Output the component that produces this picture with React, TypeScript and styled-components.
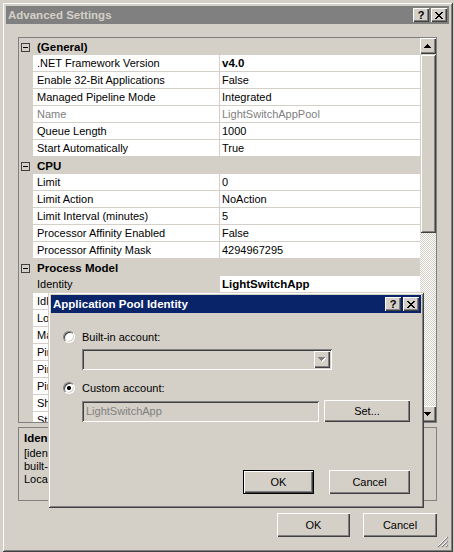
import React from "react";
import styled, { createGlobalStyle, css } from "styled-components";

const GlobalStyle = createGlobalStyle`
  html, body {
    margin: 0;
    padding: 0;
    background: #d4d0c8;
  }
  body {
    font-family: "Liberation Sans", Arial, sans-serif;
    font-size: 11px;
    color: #000;
  }
`;

// classic 3D bevels
const frame = css`
  box-shadow: inset 1px 1px #d4d0c8, inset -1px -1px #404040,
    inset 2px 2px #fff, inset -2px -2px #808080;
`;
const raised = css`
  box-shadow: inset 1px 1px #fff, inset -1px -1px #404040,
    inset -2px -2px #808080;
`;
const sunken = css`
  box-shadow: inset 1px 1px #808080, inset -1px -1px #fff,
    inset 2px 2px #404040, inset -2px -2px #d4d0c8;
`;

const Desktop = styled.div`
  position: relative;
  width: 454px;
  height: 552px;
  overflow: hidden;
  background: #d4d0c8;
`;

const Window = styled.div`
  position: relative;
  box-sizing: border-box;
  width: 451px;
  height: 550px;
  margin: 2px 0 0 2px;
  padding: 4px;
  display: flex;
  flex-direction: column;
  background: #d4d0c8;
  ${frame}
`;

const TitleBar = styled.div<{ $active?: boolean }>`
  flex: none;
  height: 18px;
  display: flex;
  align-items: center;
  padding: 0 2px;
  background: ${(p) => (p.$active ? "#0a246a" : "#808080")};
  color: ${(p) => (p.$active ? "#fff" : "#d4d0c8")};
  font-weight: bold;
  font-size: 11.5px;
`;

const TitleText = styled.span`
  flex: 1;
  white-space: nowrap;
  overflow: hidden;
`;

const CaptionButtons = styled.div`
  display: flex;
  gap: 2px;
`;

const CaptionButton = styled.div`
  width: 16px;
  height: 14px;
  box-sizing: border-box;
  display: flex;
  align-items: center;
  justify-content: center;
  background: #d4d0c8;
  color: #000;
  font-size: 11px;
  font-weight: bold;
  line-height: 14px;
  ${raised}
`;

const Body = styled.div`
  flex: 1;
  min-height: 0;
  display: flex;
  flex-direction: column;
  padding: 13px 12px 0;
`;

const PropertyGrid = styled.div`
  flex: none;
  height: 386px;
  box-sizing: border-box;
  border: 1px solid #808080;
  display: flex;
  background: #d4d0c8;
`;

const Rows = styled.div`
  flex: 1;
  min-width: 0;
  overflow: hidden;
`;

const CategoryRow = styled.div`
  height: 17px;
  display: flex;
  align-items: center;
  background: #d4d0c8;
`;

const Gutter = styled.div`
  width: 14px;
  height: 17px;
  flex: none;
  display: flex;
  align-items: center;
  background: #d4d0c8;
`;

const Expander = styled.span`
  width: 9px;
  height: 9px;
  margin-left: 2px;
  margin-top: 1px;
  box-sizing: border-box;
  border: 1px solid #404040;
  display: flex;
  align-items: center;
  justify-content: center;
  &::before {
    content: "";
    width: 5px;
    height: 1px;
    background: #000;
  }
`;

const CategoryTitle = styled.span`
  padding-left: 4px;
  font-weight: bold;
  font-size: 11.5px;
  white-space: nowrap;
`;

const PropRow = styled.div`
  height: 17px;
  display: grid;
  grid-template-columns: 14px 187px 1fr;
`;

const Cell = styled.div<{ $muted?: boolean }>`
  box-sizing: border-box;
  height: 17px;
  line-height: 16px;
  border-bottom: 1px solid #d4d0c8;
  white-space: nowrap;
  overflow: hidden;
  color: ${(p) => (p.$muted ? "#808080" : "#000")};
`;

const NameCell = styled(Cell)<{ $selected?: boolean }>`
  padding-left: 4px;
  border-right: 1px solid #d4d0c8;
  background: ${(p) => (p.$selected ? "#d4d0c8" : "#fff")};
`;

const ValueCell = styled(Cell)<{ $bold?: boolean }>`
  padding-left: 2px;
  background: #fff;
  font-weight: ${(p) => (p.$bold ? "bold" : "normal")};
  font-size: ${(p) => (p.$bold ? "11.5px" : "11px")};
`;

const ScrollBar = styled.div`
  width: 16px;
  flex: none;
  display: flex;
  flex-direction: column;
`;

const ScrollButton = styled.div`
  height: 16px;
  flex: none;
  display: flex;
  align-items: center;
  justify-content: center;
  background: #d4d0c8;
  ${raised}
`;

const Thumb = styled.div`
  height: 179px;
  flex: none;
  background: #d4d0c8;
  ${frame}
`;

const Track = styled.div`
  flex: 1;
  background-color: #fff;
  background-image: conic-gradient(
    #d4d0c8 25%,
    #fff 0 50%,
    #d4d0c8 0 75%,
    #fff 0
  );
  background-size: 2px 2px;
`;

const HelpPanel = styled.div`
  flex: none;
  margin-top: 4px;
  height: 74px;
  box-sizing: border-box;
  border: 1px solid #808080;
  padding: 3px 5px;
  overflow: hidden;
`;

const HelpTitle = styled.div`
  font-weight: bold;
  font-size: 11.5px;
  line-height: 14px;
  margin-bottom: 2px;
`;

const HelpLine = styled.div`
  line-height: 13px;
  white-space: nowrap;
`;

const Footer = styled.div<{ $gap: number }>`
  display: flex;
  justify-content: flex-end;
  gap: ${(p) => p.$gap}px;
`;

const MainFooter = styled(Footer)`
  margin-top: 12px;
`;

const PushButton = styled.button<{ $w: number; $h?: number; $default?: boolean }>`
  width: ${(p) => p.$w}px;
  height: ${(p) => p.$h ?? 24}px;
  padding: 0;
  border: none;
  background: #d4d0c8;
  font: inherit;
  color: #000;
  ${(p) =>
    p.$default
      ? css`
          box-shadow: inset 0 0 0 1px #000, inset 2px 2px #fff,
            inset -2px -2px #404040, inset -3px -3px #808080;
        `
      : raised}
`;

const Grip = styled.svg`
  position: absolute;
  right: 4px;
  bottom: 4px;
`;

const Dialog = styled.div`
  position: absolute;
  left: 48px;
  top: 292px;
  width: 376px;
  height: 216px;
  box-sizing: border-box;
  padding: 3px;
  display: flex;
  flex-direction: column;
  background: #d4d0c8;
  ${frame}
`;

const DialogBody = styled.div`
  flex: 1;
  display: flex;
  flex-direction: column;
  padding: 17px 11px 11px 12px;
`;

const RadioRow = styled.label<{ $top?: number }>`
  height: 13px;
  margin-top: ${(p) => p.$top ?? 0}px;
  display: flex;
  align-items: center;
  gap: 7px;
`;

const Radio = styled.span<{ $checked?: boolean }>`
  width: 12px;
  height: 12px;
  box-sizing: border-box;
  border-radius: 50%;
  border: 1px solid;
  border-color: #808080 #fff #fff #808080;
  box-shadow: inset 1px 1px #404040, inset -1px -1px #d4d0c8;
  background: ${(p) =>
    p.$checked
      ? "radial-gradient(circle, #000 0 1.8px, #fff 2.3px)"
      : "#fff"};
`;

const Combo = styled.div`
  margin: 6px 0 0 19px;
  width: 250px;
  height: 21px;
  box-sizing: border-box;
  padding: 2px;
  display: flex;
  justify-content: flex-end;
  background: #d4d0c8;
  ${sunken}
`;

const DropButton = styled.div`
  width: 16px;
  height: 17px;
  display: flex;
  align-items: center;
  justify-content: center;
  ${raised}
`;

const FieldRow = styled.div`
  margin: 6px 0 0 19px;
  display: flex;
  align-items: center;
  gap: 5px;
`;

const TextField = styled.div`
  width: 237px;
  height: 21px;
  box-sizing: border-box;
  padding: 0 4px;
  line-height: 21px;
  color: #808080;
  background: #d4d0c8;
  ${sunken}
`;

const DialogFooter = styled(Footer)`
  margin-top: auto;
`;

type Prop = {
  name: string;
  value: string;
  bold?: boolean;
  muted?: boolean;
  selected?: boolean;
};
type Category = { title: string; props: Prop[] };

const categories: Category[] = [
  {
    title: "(General)",
    props: [
      { name: ".NET Framework Version", value: "v4.0", bold: true },
      { name: "Enable 32-Bit Applications", value: "False" },
      { name: "Managed Pipeline Mode", value: "Integrated" },
      { name: "Name", value: "LightSwitchAppPool", muted: true },
      { name: "Queue Length", value: "1000" },
      { name: "Start Automatically", value: "True" },
    ],
  },
  {
    title: "CPU",
    props: [
      { name: "Limit", value: "0" },
      { name: "Limit Action", value: "NoAction" },
      { name: "Limit Interval (minutes)", value: "5" },
      { name: "Processor Affinity Enabled", value: "False" },
      { name: "Processor Affinity Mask", value: "4294967295" },
    ],
  },
  {
    title: "Process Model",
    props: [
      { name: "Identity", value: "LightSwitchApp", bold: true, selected: true },
      { name: "Idle Time-out (minutes)", value: "20" },
      { name: "Load User Profile", value: "True" },
      { name: "Maximum Worker Processes", value: "1" },
      { name: "Ping Enabled", value: "True" },
      { name: "Ping Maximum Response Time (seconds)", value: "90" },
      { name: "Ping Period (seconds)", value: "30" },
      { name: "Shutdown Time Limit (seconds)", value: "90" },
      { name: "Startup Time Limit (seconds)", value: "90" },
    ],
  },
];

const helpLines = [
  "[identityType, username, password] Configures the application pool to run as",
  "built-in account, i.e. Application Pool Identity (recommended), Network Service,",
  "Local System, Local Service, or as a specific user identity.",
];

function CloseGlyph() {
  return (
    <svg width="8" height="7" viewBox="0 0 8 7" shapeRendering="crispEdges">
      <path
        fill="#000"
        d="M0 0h2v1H0zM6 0h2v1H6zM1 1h2v1H1zM5 1h2v1H5zM2 2h4v1H2zM3 3h2v1H3zM2 4h4v1H2zM1 5h2v1H1zM5 5h2v1H5zM0 6h2v1H0zM6 6h2v1H6z"
      />
    </svg>
  );
}

function Arrow({ up, disabled }: { up?: boolean; disabled?: boolean }) {
  const d = up
    ? "M3 0h1v1H3zM2 1h3v1H2zM1 2h5v1H1zM0 3h7v1H0z"
    : "M0 0h7v1H0zM1 1h5v1H1zM2 2h3v1H2zM3 3h1v1H3z";
  return (
    <svg width="8" height="5" viewBox="0 0 8 5" shapeRendering="crispEdges">
      {disabled && <path fill="#fff" d={d} transform="translate(1 1)" />}
      <path fill={disabled ? "#808080" : "#000"} d={d} />
    </svg>
  );
}

function Caption({ title, active }: { title: string; active?: boolean }) {
  return (
    <TitleBar $active={active}>
      <TitleText>{title}</TitleText>
      <CaptionButtons>
        <CaptionButton>?</CaptionButton>
        <CaptionButton>
          <CloseGlyph />
        </CaptionButton>
      </CaptionButtons>
    </TitleBar>
  );
}

export default function App() {
  return (
    <Desktop>
      <GlobalStyle />
      <Window>
        <Caption title="Advanced Settings" />
        <Body>
          <PropertyGrid>
            <Rows>
              {categories.map((c) => (
                <React.Fragment key={c.title}>
                  <CategoryRow>
                    <Gutter>
                      <Expander />
                    </Gutter>
                    <CategoryTitle>{c.title}</CategoryTitle>
                  </CategoryRow>
                  {c.props.map((p) => (
                    <PropRow key={p.name}>
                      <Gutter />
                      <NameCell $muted={p.muted} $selected={p.selected}>
                        {p.name}
                      </NameCell>
                      <ValueCell $muted={p.muted} $bold={p.bold}>
                        {p.value}
                      </ValueCell>
                    </PropRow>
                  ))}
                </React.Fragment>
              ))}
            </Rows>
            <ScrollBar>
              <ScrollButton>
                <Arrow up />
              </ScrollButton>
              <Thumb />
              <Track />
              <ScrollButton>
                <Arrow />
              </ScrollButton>
            </ScrollBar>
          </PropertyGrid>
          <HelpPanel>
            <HelpTitle>Identity</HelpTitle>
            {helpLines.map((l) => (
              <HelpLine key={l}>{l}</HelpLine>
            ))}
          </HelpPanel>
          <MainFooter $gap={13}>
            <PushButton $w={73}>OK</PushButton>
            <PushButton $w={74}>Cancel</PushButton>
          </MainFooter>
        </Body>
        <Grip width="12" height="12" viewBox="0 0 12 12">
          <path
            stroke="#808080"
            strokeWidth="1.2"
            d="M11 1 1 11M11 5 5 11M11 9 9 11"
          />
          <path
            stroke="#fff"
            strokeWidth="1"
            d="M10 1 1 10M10 5 5 10M10 9 9 10"
          />
        </Grip>
      </Window>

      <Dialog>
        <Caption title="Application Pool Identity" active />
        <DialogBody>
          <RadioRow>
            <Radio />
            Built-in account:
          </RadioRow>
          <Combo>
            <DropButton>
              <Arrow disabled />
            </DropButton>
          </Combo>
          <RadioRow $top={11}>
            <Radio $checked />
            Custom account:
          </RadioRow>
          <FieldRow>
            <TextField>LightSwitchApp</TextField>
            <PushButton $w={86} $h={22}>
              Set...
            </PushButton>
          </FieldRow>
          <DialogFooter $gap={15}>
            <PushButton $w={71} $default>
              OK
            </PushButton>
            <PushButton $w={81}>Cancel</PushButton>
          </DialogFooter>
        </DialogBody>
      </Dialog>
    </Desktop>
  );
}
